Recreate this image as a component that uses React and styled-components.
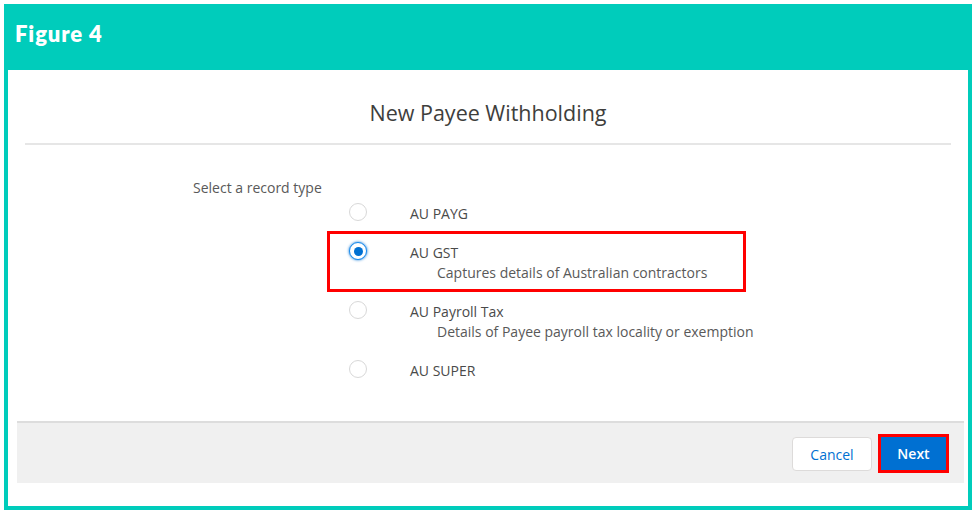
import React, { useState } from "react";
import styled, { createGlobalStyle } from "styled-components";

const GlobalStyle = createGlobalStyle`
	html, body {
		margin: 0;
		padding: 0;
		background: #ffffff;
	}
	body {
		font-family: "Open Sans", "Noto Sans", sans-serif;
	}
`;

const TEAL = "#00ccbb";

const options = [
	{ id: "payg", label: "AU PAYG" },
	{ id: "gst", label: "AU GST", desc: "Captures details of Australian contractors" },
	{ id: "payroll", label: "AU Payroll Tax", desc: "Details of Payee payroll tax locality or exemption" },
	{ id: "super", label: "AU SUPER" },
];

function App() {
	const [selected, setSelected] = useState("gst");

	return (
		<>
			<GlobalStyle />
			<Frame>
				<FigureBar>Figure 4</FigureBar>
				<Body>
					<ModalHeader>New Payee Withholding</ModalHeader>
					<Form>
						<Legend>Select a record type</Legend>
						<OptionList>
							{options.map((o) => (
								<Option
									key={o.id}
									$highlighted={o.id === "gst"}
									onClick={() => setSelected(o.id)}
								>
									<Radio $checked={selected === o.id} />
									<OptionText>
										<Label>{o.label}</Label>
										{o.desc && <Desc>{o.desc}</Desc>}
									</OptionText>
								</Option>
							))}
						</OptionList>
					</Form>
					<Footer>
						<CancelButton>Cancel</CancelButton>
						<NextButton>Next</NextButton>
					</Footer>
				</Body>
			</Frame>
		</>
	);
}

const Frame = styled.div`
	margin: 4px;
	width: 968px;
	height: 506px;
	display: flex;
	flex-direction: column;
`;

const FigureBar = styled.div`
	height: 66px;
	background: ${TEAL};
	color: #ffffff;
	font-family: "Lato", "Open Sans", sans-serif;
	font-weight: 800;
	font-size: 22px;
	letter-spacing: 0.9px;
	display: flex;
	align-items: center;
	padding-left: 11px;
	padding-bottom: 7px;
	box-sizing: border-box;
`;

const Body = styled.div`
	flex: 1;
	border: 4px solid ${TEAL};
	border-top: none;
	display: flex;
	flex-direction: column;
	padding-bottom: 23px;
`;

const ModalHeader = styled.h2`
	margin: 0 17px;
	height: 75px;
	box-sizing: border-box;
	padding-bottom: 15px;
	border-bottom: 2px solid #e6e6e6;
	display: flex;
	align-items: flex-end;
	justify-content: center;
	font-size: 21.5px;
	line-height: 30px;
	font-weight: 400;
	color: #3e3e3c;
`;

const Form = styled.div`
	flex: 1;
	padding: 33px 0 0 185px;
	font-size: 14px;
	color: #3e3e3c;
`;

const Legend = styled.div`
	line-height: 20px;
	color: #595959;
`;

const OptionList = styled.div`
	margin: 6px 0 0 156px;
	display: flex;
	flex-direction: column;
	gap: 19px;
`;

const Option = styled.div`
	position: relative;
	display: flex;
	align-items: flex-start;
	gap: 43px;
	cursor: pointer;

	&::after {
		content: "";
		display: ${(p) => (p.$highlighted ? "block" : "none")};
		position: absolute;
		left: -22px;
		top: -12px;
		width: 419px;
		height: 61px;
		box-sizing: border-box;
		border: 3px solid #ff0000;
		pointer-events: none;
	}
`;

const Radio = styled.span`
	width: 18px;
	height: 18px;
	margin-top: -1px;
	border-radius: 50%;
	box-sizing: border-box;
	background: #ffffff;
	border: 1px solid ${(p) => (p.$checked ? "#1589ee" : "#d8d8d8")};
	box-shadow: ${(p) => (p.$checked ? "0 0 3px #0070d2" : "none")};
	display: flex;
	align-items: center;
	justify-content: center;
	flex-shrink: 0;

	&::before {
		content: "";
		display: ${(p) => (p.$checked ? "block" : "none")};
		width: 9px;
		height: 9px;
		border-radius: 50%;
		background: #0070d2;
	}
`;

const OptionText = styled.div`
	display: flex;
	flex-direction: column;
`;

const Label = styled.div`
	line-height: 20px;
	color: #4a4a4a;
`;

const Desc = styled.div`
	line-height: 20px;
	padding-left: 27px;
	color: #595959;
`;

const Footer = styled.div`
	margin: 0 4px 0 9px;
	height: 62px;
	box-sizing: border-box;
	background: #f0f0f0;
	border-top: 2px solid #dddddd;
	display: flex;
	align-items: center;
	justify-content: flex-end;
	gap: 6px;
	padding: 0 15px 0 0;
`;

const ButtonBase = styled.button`
	font-family: "Open Sans", "Noto Sans", sans-serif;
	font-size: 14px;
	height: 34px;
	border-radius: 4px;
	cursor: pointer;
	box-sizing: border-box;
`;

const CancelButton = styled(ButtonBase)`
	width: 80px;
	margin-top: 2px;
	background: #ffffff;
	border: 1px solid #dddbda;
	color: #0070d2;
`;

const NextButton = styled(ButtonBase)`
	width: 71px;
	height: 39px;
	background: #0070d2;
	border: 3px solid #ff0000;
	border-radius: 0;
	color: #ffffff;
	font-weight: 600;
`;

export default App;
